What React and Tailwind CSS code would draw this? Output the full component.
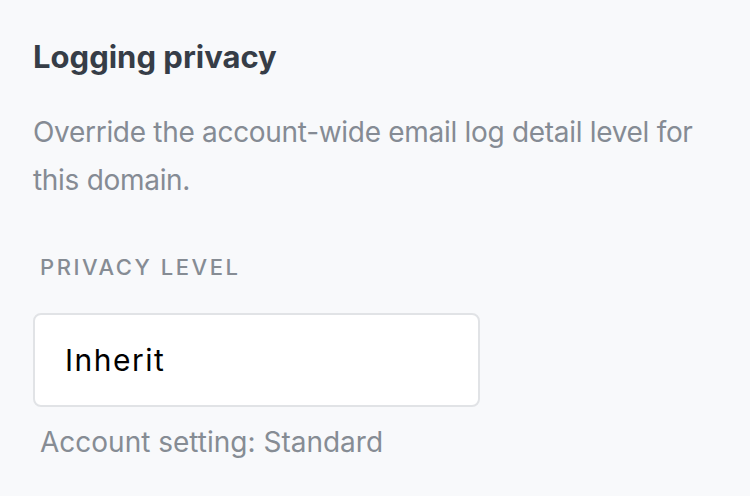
import React from "react";

export default function App() {
  return (
    <div className="min-h-[496px] w-[750px] bg-[#f8f9fb] font-['Inter',sans-serif]">
      <div className="pl-[33px] pt-[37px] w-[713px]">
        <h2 className="text-[31px] leading-[40px] font-bold text-[#363d47]">
          Logging privacy
        </h2>
        <p className="mt-[31px] text-[28px] leading-[48px] tracking-[-0.3px] text-[#858b94]">
          Override the account-wide email log detail level for this domain.
        </p>
        <div className="mt-[49px]">
          <label className="block px-[7px] text-[22px] leading-[28px] font-medium tracking-[0.115em] uppercase text-[#868c94]">
            Privacy level
          </label>
          <div className="mt-[32px] w-[447px] h-[94px] flex items-center pl-[30px] bg-white border-2 border-[#e1e3e6] rounded-[8px]">
            <span className="text-[30px] tracking-[1.5px] text-black">Inherit</span>
          </div>
          <p className="mt-[18px] px-[7px] text-[28px] leading-[34px] text-[#868c94]">
            Account setting: Standard
          </p>
        </div>
      </div>
    </div>
  );
}
